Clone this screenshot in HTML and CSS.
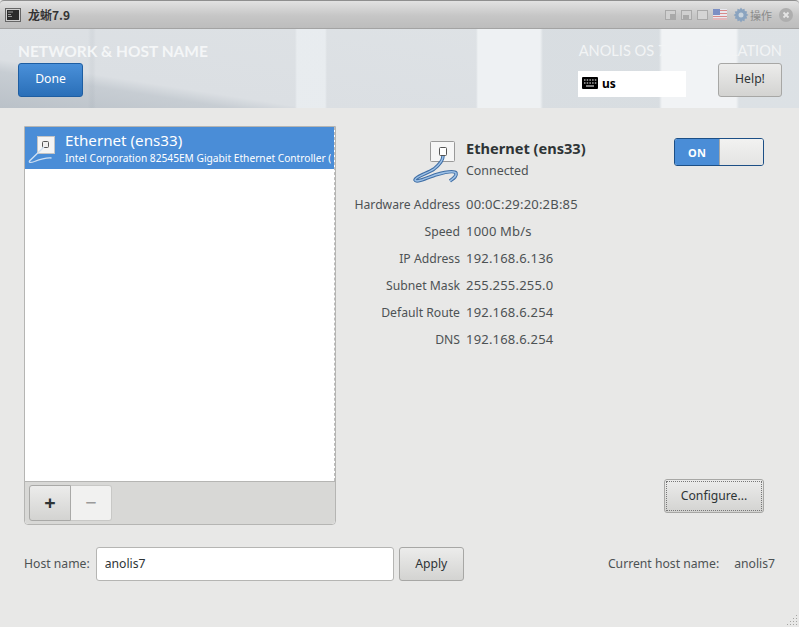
FILE: index.html
```html
<!DOCTYPE html>
<html lang="zh">
<head>
<meta charset="utf-8">
<title>龙蜥7.9</title>
<link rel="stylesheet" href="styles.css">
</head>
<body>
<div class="window">
  <div class="titlebar">
    <svg class="term" width="16" height="14" viewBox="0 0 16 14"><rect x="0.5" y="0.5" width="15" height="13" fill="#cfcfcf" stroke="#666"/><rect x="2" y="2" width="12" height="10" fill="#2b2b2b"/><path d="M3 4h5M3 6.500h3M3 8.500h4" stroke="#9a9a9a" fill="none"/></svg>
    <span class="wintitle">龙蜥7.9</span>
    <div class="winctl">
      <svg width="11" height="10" viewBox="0 0 11 10"><rect x="0.500" y="0.500" width="10" height="9" fill="#d0d0d0" stroke="#a9a9a9"/><rect x="5" y="4" width="5" height="5" fill="#a9a9a9"/></svg>
      <svg width="11" height="10" viewBox="0 0 11 10"><rect x="0.500" y="0.500" width="10" height="9" fill="#d0d0d0" stroke="#a9a9a9"/><rect x="2" y="5" width="6" height="4" fill="#a9a9a9"/></svg>
      <svg width="11" height="10" viewBox="0 0 11 10"><rect x="0.500" y="0.500" width="10" height="9" fill="#d4d4d4" stroke="#a9a9a9"/></svg>
      <svg class="flag" width="14" height="11" viewBox="0 0 14 11"><rect width="14" height="11" fill="#e8e8ee"/><path d="M0 1.500h14M0 4.500h14M0 7.500h14M0 10h14" stroke="#d98a8a" stroke-width="1.200"/><rect width="7" height="6" fill="#7c8fc4"/></svg>
      <svg class="gear" width="16" height="16" viewBox="0 0 16 16"><path d="M8 0.500l1.300 2 2.200-.8.300 2.400 2.400.3-.8 2.200 2 1.400-2 1.300.8 2.200-2.400.3-.3 2.400-2.200-.8L8 15.500l-1.300-2-2.200.8-.3-2.400-2.400-.3.8-2.200-2-1.400 2-1.300-.8-2.200 2.400-.3.300-2.400 2.200.8z" fill="#8aa3bf"/><circle cx="8" cy="8" r="2.500" fill="#c9d3dc"/></svg>
      <span class="ops">操作</span>
      <svg class="closebtn" width="14" height="14" viewBox="0 0 14 14"><circle cx="7" cy="7" r="7" fill="#aeaeae"/><path d="M4.500 4.500l5 5M9.500 4.500l-5 5" stroke="#e4e4e4" stroke-width="1.800"/></svg>
    </div>
  </div>

  <header class="hero">
    <div class="hero-left">
      <h1 class="hero-title">NETWORK &amp; HOST NAME</h1>
      <button class="btn-done">Done</button>
    </div>
    <div class="hero-right">
      <div class="product">ANOLIS OS 7.9 INSTALLATION</div>
      <div class="hero-controls">
        <div class="kbd">
          <svg width="16" height="12" viewBox="0 0 16 12"><rect width="16" height="12" rx="1" fill="#000"/><path d="M2 3h1.500M4.700 3h1.500M7.400 3h1.500M10.100 3h1.500M12.800 3h1.500M2 6h1.500M4.700 6h1.500M7.400 6h1.500M10.100 6h1.500M12.800 6h1.500M4 9h8" stroke="#fff" stroke-width="1.200"/></svg>
          <span>us</span>
        </div>
        <button class="btn-help">Help!</button>
      </div>
    </div>
  </header>

  <main class="content">
    <div class="columns">
      <section class="list-panel">
        <div class="list">
          <div class="list-row">
            <svg class="row-icon" width="30" height="32" viewBox="0 0 30 32">
              <rect x="9.500" y="0.500" width="17" height="17" fill="#f4f4f4" stroke="#c4c4c4"/>
              <rect x="14.500" y="5.500" width="6" height="6" rx="1" fill="#eee" stroke="#555"/>
              <path d="M16 11L1.500 25c-1 2 2 1.500 5 .5 5-2 11-4 17-3.500" fill="none" stroke="#cfe0f2" stroke-width="1.300"/>
            </svg>
            <div class="row-text">
              <div class="row-title">Ethernet (ens33)</div>
              <div class="row-sub">Intel Corporation 82545EM Gigabit Ethernet Controller (</div>
            </div>
          </div>
        </div>
        <div class="list-toolbar">
          <div class="addrem">
            <button class="tool add">+</button>
            <button class="tool rem">−</button>
          </div>
        </div>
      </section>

      <section class="detail">
        <div class="detail-top">
          <div class="device">
            <svg class="dev-icon" width="48" height="50" viewBox="0 0 48 50">
              <rect x="18.500" y="4.500" width="24" height="20" rx="1" fill="#f6f6f6" stroke="#999"/>
              <rect x="27.500" y="10.500" width="7" height="8" rx="1" fill="#fff" stroke="#555"/>
              <path d="M31 19c0 5-4 9-9 13-6 4-19 8-19 11 1 3 12-2 20-5 7-2 19-5 21-2 1 3-2 5-6 8" fill="none" stroke="#3f6ea5" stroke-width="3.500"/>
              <path d="M31 19c0 5-4 9-9 13-6 4-19 8-19 11 1 3 12-2 20-5 7-2 19-5 21-2 1 3-2 5-6 8" fill="none" stroke="#9cc0e6" stroke-width="1.500"/>
            </svg>
            <div>
              <div class="dev-name">Ethernet (ens33)</div>
              <div class="dev-status">Connected</div>
            </div>
          </div>
          <div class="switch"><span class="switch-on">ON</span><span class="switch-knob"></span></div>
        </div>
        <dl class="props">
          <dt>Hardware Address</dt><dd>00:0C:29:20:2B:85</dd>
          <dt>Speed</dt><dd>1000 Mb/s</dd>
          <dt>IP Address</dt><dd>192.168.6.136</dd>
          <dt>Subnet Mask</dt><dd>255.255.255.0</dd>
          <dt>Default Route</dt><dd>192.168.6.254</dd>
          <dt>DNS</dt><dd>192.168.6.254</dd>
        </dl>
        <div class="detail-actions"><button class="btn btn-configure"><span class="focus">Configure...</span></button></div>
      </section>
    </div>

    <div class="hostbar">
      <label class="host-label" for="hostname">Host name:</label>
      <input class="host-input" id="hostname" value="anolis7">
      <button class="btn btn-apply">Apply</button>
      <div class="current"><span>Current host name:</span><span>anolis7</span></div>
    </div>
    <svg class="grip" width="12" height="12" viewBox="0 0 12 12"><path d="M10 1h1v1h-1zM7 4h1v1H7zM10 4h1v1h-1zM4 7h1v1H4zM7 7h1v1H7zM10 7h1v1h-1zM1 10h1v1H1zM4 10h1v1H4zM7 10h1v1H7zM10 10h1v1h-1z" fill="#a5a5a3"/></svg>
  </main>
</div>
</body>
</html>
```
FILE: styles.css
```css
* { box-sizing: border-box; }
html, body { margin: 0; padding: 0; height: 100%; }
body {
  font-family: "Noto Sans", "Noto Sans CJK SC", "DejaVu Sans", sans-serif;
  font-size: 12.200px;
  color: #2e3436;
  background: #e8e8e7;
  overflow: hidden;
}
.window { width: 799px; height: 627px; display: flex; flex-direction: column; }

.titlebar {
  height: 29px;
  flex: none;
  display: flex;
  align-items: center;
  padding: 0 6px 0 5px;
  border-top: 1px solid #8f8f8f;
  border-bottom: 1px solid #a3a3a3;
  border-radius: 4px 4px 0 0;
  background: linear-gradient(#e2e2e2, #c6c6c6 55%, #bdbdbd);
}
.wintitle { margin-left: 7px; font-size: 12px; font-weight: 700; color: #333; font-family: "Noto Sans CJK SC", "Noto Sans", sans-serif; }
.winctl { margin-left: auto; display: flex; align-items: center; gap: 5px; }
.flag { margin-left: 0; }
.gear { margin-left: 1px; }
.ops { font-size: 11px; color: #8a8a8a; margin-left: -4px; }
.closebtn { margin-left: 2px; }

.hero {
  height: 79px;
  flex: none;
  display: flex;
  justify-content: space-between;
  padding: 12px 17px 0 18px;
  background:
    linear-gradient(90deg,
      transparent 295px, rgba(234,238,241,.85) 297px, rgba(234,238,241,.85) 325px, transparent 327px,
      transparent 476px, #eef1f3 478px, #eef1f3 540px,
      rgba(216,221,225,.9) 543px, rgba(216,221,225,.9) 659px,
      #f1f3f5 662px, #f1f3f5 736px,
      rgba(220,225,229,.9) 739px),
    linear-gradient(90deg, transparent 88px, rgba(130,140,150,.08) 91px, rgba(130,140,150,.08) 93px, transparent 96px),
    linear-gradient(9deg, #bac1c8 0, #c7cdd3 36px, #dbdfe3 48px, #dfe3e6 203px);
}
.hero-title { margin: 0; font-family: Lato, "Noto Sans", sans-serif; font-size: 15.500px; line-height: 20px; font-weight: 700; color: #f4f6f7; }
.hero-left { display: flex; flex-direction: column; gap: 2px; }
.btn-done {
  width: 65px; height: 34px; padding: 0 0 4px;
  font: inherit; color: #fff;
  border: 1px solid #1e5ea2; border-radius: 3px;
  background: linear-gradient(#4a90d9, #2a6fb8);
}
.hero-right { width: 204px; display: flex; flex-direction: column; gap: 2px; }
.product { font-family: Lato, "Noto Sans", sans-serif; font-size: 14.600px; line-height: 20px; color: #f2f4f5; text-align: right; white-space: nowrap; }
.hero-controls { display: flex; justify-content: space-between; align-items: flex-start; }
.kbd {
  width: 108px; height: 26px; margin-top: 8px;
  display: flex; align-items: center; gap: 4px; padding: 0 0 2px 4px;
  background: #fff; color: #000; font-size: 12px; font-weight: 700;
}
.btn-help {
  width: 64px; height: 34px; padding: 0 0 4px;
  font: inherit; color: #2e3436;
  border: 1px solid #a7a7a5; border-radius: 3px;
  background: linear-gradient(#ececeb, #d3d3d1);
}

.content { flex: 1; display: flex; flex-direction: column; position: relative; padding: 18px 24px 0; }
.columns { display: flex; height: 399px; flex: none; }

.list-panel {
  width: 312px; flex: none;
  display: flex; flex-direction: column;
  border: 1px solid #b5b5b3; border-radius: 0 0 4px 4px;
  background: #fff;
}
.list { flex: 1; border-right: 1px dashed #bdbdbd; }
.list-row {
  height: 42px;
  display: flex; align-items: center;
  padding-left: 3px; gap: 7px;
  background: #4a8dd7; color: #fff;
  overflow: hidden;
}
.row-icon { flex: none; margin-top: 8px; }
.row-text { min-width: 0; white-space: nowrap; overflow: hidden; }
.row-title { font-size: 15.200px; line-height: 20px; margin-bottom: 1px; margin-top: -1px; }
.row-sub { font-size: 10.200px; line-height: 15px; }
.list-toolbar {
  height: 43px; flex: none; padding: 3px 4px;
  background: #d8d8d6; border-top: 1px solid #b5b5b3;
  border-radius: 0 0 4px 4px;
}
.addrem { display: flex; width: 83px; height: 36px; }
.tool { height: 36px; padding: 0; font: inherit; font-size: 20px; line-height: 1; border: 1px solid #b5b5b3; }
.add { width: 42px; font-weight: 700; color: #2e3436; border-radius: 3px 0 0 3px; background: linear-gradient(#ececeb, #d3d3d1); border-color: #a9a9a7; }
.rem { width: 41px; color: #9a9a9a; background: #f1f1f0; border-left: 0; border-radius: 0 3px 3px 0; border-color: #c8c8c6; }

.detail { flex: 1; display: flex; flex-direction: column; padding-right: 11px; }
.detail-top { display: flex; justify-content: space-between; align-items: flex-start; height: 49px; margin-top: 12px; }
.device { display: flex; align-items: flex-start; gap: 7px; margin-left: 77px; }
.dev-icon { flex: none; margin-top: -1px; margin-left: -1px; margin-right: -1px; }
.dev-name { font-size: 14.600px; font-weight: 700; line-height: 20px; margin-top: 0; }
.dev-status { font-size: 12.400px; line-height: 20px; margin-top: 3px; color: #4d5254; }
.switch { width: 90px; height: 28px; display: flex; border: 1px solid #1c4f86; border-radius: 3px; overflow: hidden; }
.switch-on { width: 44px; display: flex; align-items: center; justify-content: center; background: #4a8dd7; color: #fff; font-size: 11px; font-weight: 700; letter-spacing: .3px; }
.switch-knob { flex: 1; background: linear-gradient(#f2f2f1, #e4e4e3); border-left: 1px solid #a9a9a7; }

.props {
  margin: 4px 0 0;
  display: grid;
  grid-template-columns: 124px auto;
  grid-auto-rows: 27px;
  column-gap: 6px;
  align-items: center;
  justify-content: start;
  line-height: 18px;
  color: #4d5254;
}
.props dt { text-align: right; white-space: nowrap; margin-left: -6px; }
.props dd { margin: 0 0 2px; font-size: 13px; letter-spacing: .2px; }

.detail-actions { margin-top: auto; display: flex; justify-content: flex-end; padding-bottom: 12px; }
.btn { font: inherit; color: #2e3436; padding: 0; border: 1px solid #a7a7a5; border-radius: 3px; background: linear-gradient(#ececeb, #d3d3d1); }
.btn-configure { width: 100px; height: 34px; padding: 1px 1px 1px; }
.focus { display: flex; height: 100%; align-items: center; justify-content: center; border: 1px dotted #777; padding-bottom: 2px; }

.hostbar { display: flex; align-items: center; margin-top: 22px; height: 34px; flex: none; }
.host-label { color: #4d5254; margin-right: 6px; white-space: nowrap; padding-bottom: 2px; }
.host-input { width: 298px; height: 34px; padding: 0 8px 2px; font: inherit; color: #2e3436; background: #fff; border: 1px solid #b5b5b3; border-radius: 3px; }
.btn-apply { width: 65px; height: 34px; margin-left: 5px; padding-bottom: 2px; }
.current { margin-left: auto; display: flex; gap: 15px; color: #4d5254; padding-bottom: 2px; }

.grip { position: absolute; right: 1px; bottom: 1px; }
```
